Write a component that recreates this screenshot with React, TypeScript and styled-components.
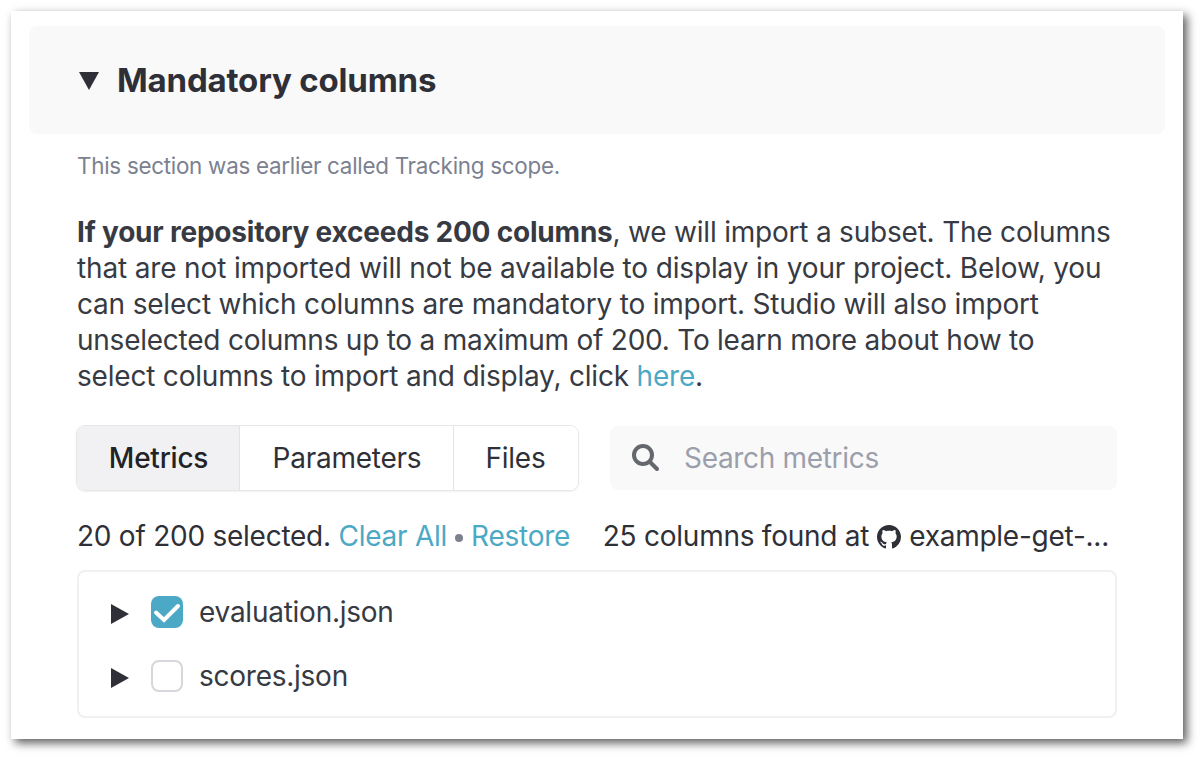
import React from "react";
import styled, { createGlobalStyle } from "styled-components";
import { BsGithub } from "react-icons/bs";

const Global = createGlobalStyle`
  * { box-sizing: border-box; }
  body {
    margin: 0;
    background: #fff;
    overflow: hidden;
    font-family: Inter, "Liberation Sans", sans-serif;
    font-size: 28px;
    letter-spacing: -0.25px;
    color: #2f3037;
  }
`;

const Page = styled.div`
  height: 758px;
  padding: 11px 19px 19px 11px;
`;

const Card = styled.main`
  height: 728px;
  padding: 15px 18px 0;
  background: #fff;
  box-shadow: 4px 4px 9px rgba(0, 0, 0, 0.64);
`;

const Header = styled.header`
  display: flex;
  align-items: center;
  gap: 18px;
  height: 108px;
  padding-left: 50px;
  border-radius: 8px;
  background: #f9f9f9;
`;

const Title = styled.h2`
  margin: 0;
  font-size: 33px;
  font-weight: 650;
  line-height: 40px;
  letter-spacing: -0.18px;
`;

const Collapse = styled.svg`
  margin-top: 2px;
`;

const Content = styled.section`
  padding: 14px 48px 0;
`;

const Note = styled.p`
  margin: 0;
  font-size: 22.4px;
  line-height: 36px;
  letter-spacing: -0.27px;
  color: #7c8190;
`;

const Description = styled.p`
  margin: 30px -20px 0 0;
  line-height: 36px;
  color: #373a42;
`;

const Line = styled.span<{ $spacing: number }>`
  display: block;
  white-space: nowrap;
  letter-spacing: ${(p) => p.$spacing}px;
`;

const Link = styled.a`
  color: #4ca9c5;
`;

const Controls = styled.div`
  display: flex;
  justify-content: space-between;
  align-items: center;
  height: 66px;
  margin: 31px 0 0 -1px;
`;

const Tabs = styled.div`
  display: flex;
  width: 503px;
  height: 66px;
  border: 1px solid #e5e6e8;
  border-radius: 9px;
  overflow: hidden;
  box-shadow: 0 1px 2px rgba(0, 0, 0, 0.06);
`;

const Tab = styled.button<{ $active?: boolean; $width: number }>`
  width: ${(p) => p.$width}px;
  padding: 0 0 0 1px;
  border: 0;
  border-right: 1px solid #e2e3e6;
  background: ${(p) => (p.$active ? "#f1f1f3" : "#fff")};
  color: ${(p) => (p.$active ? "#222326" : "#2f3037")};
  font: ${(p) => (p.$active ? 550 : 400)} 28px Inter, sans-serif;
  letter-spacing: -0.25px;
  &:last-child {
    padding: 0 1px 0 0;
    border-right: 0;
  }
`;

const Search = styled.label`
  display: flex;
  align-items: center;
  gap: 24px;
  width: 507px;
  height: 64px;
  padding-left: 22px;
  border-radius: 8px;
  background: #f9f9f9;
  color: #9b9fab;
  letter-spacing: -0.32px;
`;

const Status = styled.div`
  display: flex;
  align-items: center;
  justify-content: space-between;
  height: 36px;
  margin-top: 27px;
  padding-right: 8px;
  white-space: nowrap;
`;

const Actions = styled.div`
  display: flex;
  align-items: center;
`;

const Dot = styled.span`
  width: 8px;
  height: 8px;
  margin: 3px 8px 0;
  border-radius: 50%;
  background: #7c8190;
`;

const Source = styled.div`
  display: flex;
  align-items: center;
  gap: 8px;
`;

const GithubIcon = styled(BsGithub)`
  width: 24px;
  height: 24px;
  margin-top: 2px;
`;

const Files = styled.ul`
  height: 148px;
  margin: 16px 0 0;
  padding: 8px 0 0 31px;
  border: 2px solid #f0f0f1;
  border-radius: 8px;
  list-style: none;
`;

const FileRow = styled.li`
  display: flex;
  align-items: center;
  height: 64px;
  color: #373a42;
`;

const Arrow = styled.svg`
  margin: 3px 0 0 1px;
`;

const Check = styled.span<{ $checked?: boolean }>`
  display: flex;
  width: 32px;
  height: 32px;
  margin: 0 16px 0 22px;
  border-radius: 8px;
  border: ${(p) => (p.$checked ? "0" : "2px solid #d6d6dc")};
  background: ${(p) => (p.$checked ? "#4ca9c5" : "#fff")};
`;

const Expand = () => (
  <Arrow width="18" height="20" viewBox="0 0 18 20">
    <path d="M0 0L18 10L0 20Z" fill="#2f3037" />
  </Arrow>
);

export default function App() {
  return (
    <>
      <Global />
      <Page>
        <Card>
          <Header>
            <Collapse width="20" height="18" viewBox="0 0 20 18">
              <path d="M0 0H20L10 18Z" fill="#2f3037" />
            </Collapse>
            <Title>Mandatory columns</Title>
          </Header>
          <Content>
            <Note>This section was earlier called Tracking scope.</Note>
            <Description>
              <Line $spacing={-0.21}><strong>If your repository exceeds 200 columns</strong>, we will import a subset. The columns</Line>
              <Line $spacing={-0.15}>that are not imported will not be available to display in your project. Below, you</Line>
              <Line $spacing={-0.19}>can select which columns are mandatory to import. Studio will also import</Line>
              <Line $spacing={-0.24}>unselected columns up to a maximum of 200. To learn more about how to</Line>
              <Line $spacing={-0.2}>select columns to import and display, click <Link>here</Link>.</Line>
            </Description>
            <Controls>
              <Tabs>
                <Tab $active $width={163}>Metrics</Tab>
                <Tab $width={214}>Parameters</Tab>
                <Tab $width={124}>Files</Tab>
              </Tabs>
              <Search>
                <svg width="28" height="28" viewBox="0 0 28 28" fill="none" stroke="#65676e" strokeWidth="4">
                  <circle cx="11" cy="11" r="9" />
                  <path d="M18 18L25 25" strokeLinecap="round" />
                </svg>
                <span>Search metrics</span>
              </Search>
            </Controls>
            <Status>
              <Actions>
                <span>20 of 200 selected.&nbsp;</span>
                <Link>Clear All</Link>
                <Dot />
                <Link>Restore</Link>
              </Actions>
              <Source>
                <span>25 columns found at</span>
                <GithubIcon />
                <span>example-get-...</span>
              </Source>
            </Status>
            <Files>
              <FileRow>
                <Expand />
                <Check $checked>
                  <svg width="32" height="32" viewBox="0 0 32 32" fill="none">
                    <path d="M5 16.5L13 24L27 10" stroke="#fff" strokeWidth="4" strokeLinecap="round" />
                  </svg>
                </Check>
                evaluation.json
              </FileRow>
              <FileRow>
                <Expand />
                <Check />
                scores.json
              </FileRow>
            </Files>
          </Content>
        </Card>
      </Page>
    </>
  );
}
